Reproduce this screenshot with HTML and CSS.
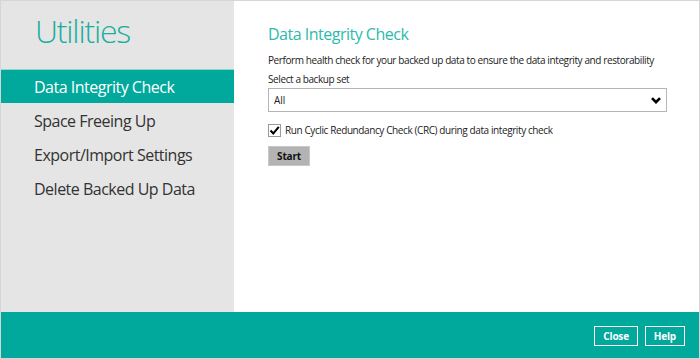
FILE: index.html
```html
<!doctype html>
<html>
<head>
	<title>Utilities</title>
	<meta charset="utf-8">
	<link rel="stylesheet" href="styles.css">
</head>
<body>
	<div class="window">
		<div class="main">
			<div class="sidebar">
				<h1 class="title">Utilities</h1>
				<div class="nav">
					<a href="#" class="navItem active">Data Integrity Check</a>
					<a href="#" class="navItem">Space Freeing Up</a>
					<a href="#" class="navItem">Export/Import Settings</a>
					<a href="#" class="navItem">Delete Backed Up Data</a>
				</div>
			</div>
			<div class="content">
				<h2 class="heading">Data Integrity Check</h2>
				<p class="desc">Perform health check for your backed up data to ensure the data integrity and restorability</p>
				<div class="label">Select a backup set</div>
				<div class="select">
					<span>All</span>
					<svg class="chevron" width="10" height="7" viewBox="0 0 10 7"><path d="M1 1.2 L5 5.2 L9 1.2" fill="none" stroke="#000" stroke-width="2.6"/></svg>
				</div>
				<label class="check">
					<span class="box"><svg width="11" height="11" viewBox="0 0 11 11"><path d="M1.5 5.5 L4.3 8.5 L9.8 1.8" fill="none" stroke="#000" stroke-width="2"/></svg></span>
					Run Cyclic Redundancy Check (CRC) during data integrity check
				</label>
				<button class="start">Start</button>
			</div>
		</div>
		<div class="footer">
			<button class="footBtn">Close</button>
			<button class="footBtn">Help</button>
		</div>
	</div>
</body>
</html>
```

FILE: styles.css
```css
html, body { margin: 0px; padding: 0px }
body {
	font-family: "Open Sans", "Noto Sans", sans-serif;
	color: #333;
}
.window {
	width: 698px;
	height: 357px;
	border: 1px solid #d6d6d6;
	display: flex;
	flex-direction: column;
	background-color: #fff;
}
.main {
	display: flex;
	height: 311px;
}
.sidebar {
	width: 233px;
	background-color: #e5e5e5;
}
.title {
	margin: 0px;
	padding: 8px 0px 0px 34px;
	height: 60px;
	font-size: 32px;
	font-weight: 300;
	color: #1aae9f;
	letter-spacing: -1.2px;
}
.nav {
	display: flex;
	flex-direction: column;
}
.navItem {
	display: block;
	height: 34px;
	line-height: 36px;
	padding-left: 33px;
	font-size: 16px;
	letter-spacing: -0.5px;
	color: #333;
	text-decoration: none;
}
.navItem.active {
	background-color: #00a99c;
	color: #fff;
	border-top: 1px solid #8fd8d0;
	height: 33px;
	line-height: 35px;
}
.content {
	flex: 1;
	padding: 22px 32px 0px 34px;
}
.heading {
	margin: 0px;
	font-size: 16px;
	font-weight: 400;
	letter-spacing: -0.5px;
	color: #2dbaab;
	line-height: 22px;
}
.desc, .label, .check, .select {
	font-size: 10px;
	letter-spacing: -0.4px;
	color: #222;
	white-space: nowrap;
}
.desc {
	margin: 7px 0px 0px 0px;
	line-height: 16px;
}
.label {
	margin-top: 3px;
	line-height: 16px;
}
.select {
	margin-top: 1px;
	height: 22px;
	border: 1px solid #b5b5b5;
	display: flex;
	align-items: center;
	justify-content: space-between;
	padding: 0px 5px 0px 5px;
	letter-spacing: 0px;
}
.chevron { margin-top: 1px }
.check {
	display: flex;
	align-items: center;
	margin-top: 11px;
}
.box {
	width: 11px;
	height: 11px;
	border: 1px solid #9a9a9a;
	margin-right: 4px;
	display: flex;
}
.start {
	display: block;
	margin-top: 9px;
	width: 42px;
	height: 20px;
	border: 1px solid #c8c8c8;
	background-color: #b3b3b3;
	font-family: "Open Sans", sans-serif;
	font-size: 10px;
	font-weight: 700;
	letter-spacing: -0.2px;
	color: #111;
	padding: 0px;
}
.footer {
	height: 46px;
	background-color: #00a99c;
	display: flex;
	justify-content: flex-end;
	align-items: center;
	gap: 7px;
	padding-right: 14px;
}
.footBtn {
	height: 20px;
	border: 1.5px solid #fff;
	background-color: transparent;
	color: #fff;
	font-family: "Open Sans", sans-serif;
	font-size: 10px;
	font-weight: 700;
	letter-spacing: -0.2px;
	padding: 0px 8px;
	margin-top: 2px;
}
```
